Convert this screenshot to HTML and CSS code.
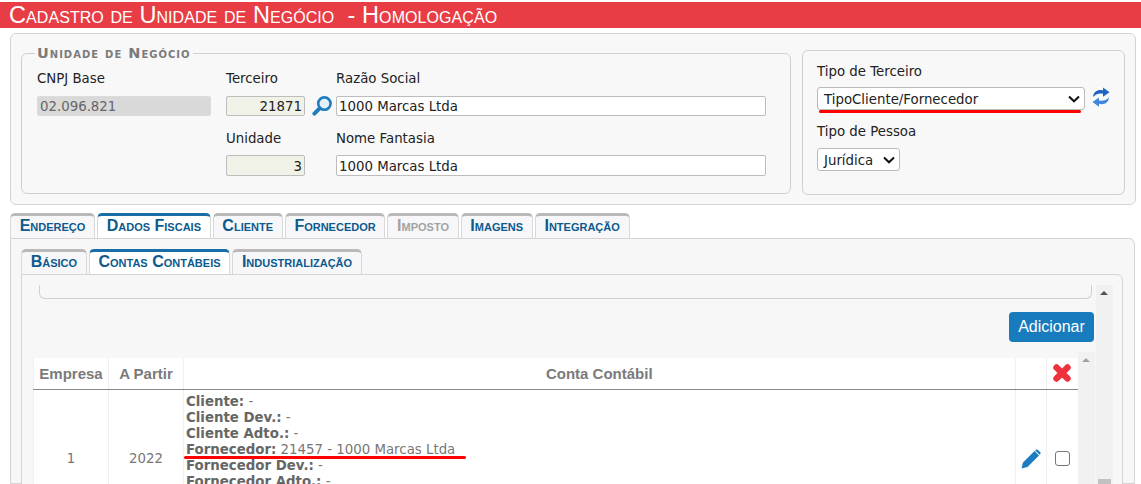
FILE: index.html
```html
<!DOCTYPE html>
<html lang="pt-BR">
<head>
  <meta charset="utf-8"/>
  <title>Cadastro de Unidade de Negócio</title>
  <link rel="stylesheet" href="styles.css">
</head>
<body>
  <h1 class="title">Cadastro de Unidade de Negócio &nbsp;- Homologação</h1>

  <!-- Cabeçalho -->
  <div class="top-panel">
    <fieldset class="unit-box">
      <legend>Unidade de Negócio</legend>
      <div class="unit-grid">
        <div class="col-cnpj">
          <label>CNPJ Base</label>
          <div class="field readonly">02.096.821</div>
        </div>
        <div class="col-code">
          <label>Terceiro</label>
          <div class="field code">21871</div>
          <label class="second">Unidade</label>
          <div class="field code">3</div>
        </div>
        <div class="col-search">
          <svg class="icon-search" viewBox="0 0 20 20" width="20" height="20">
            <circle cx="12.4" cy="7.6" r="6.2" fill="#e4f1fa" stroke="#1f7dbd" stroke-width="2.6"/>
            <path d="M7.6 12.4 L2.4 17.6" stroke="#1f7dbd" stroke-width="4" stroke-linecap="round"/>
          </svg>
        </div>
        <div class="col-name">
          <label>Razão Social</label>
          <div class="field">1000 Marcas Ltda</div>
          <label class="second">Nome Fantasia</label>
          <div class="field">1000 Marcas Ltda</div>
        </div>
      </div>
    </fieldset>

    <div class="type-box">
      <label class="first">Tipo de Terceiro</label>
      <div class="select-row">
        <div class="select wide">
          <span>TipoCliente/Fornecedor</span>
          <svg class="chevron" viewBox="0 0 12 8" width="12" height="8"><path d="M1 1.5 L6 6.3 L11 1.5" fill="none" stroke="#111" stroke-width="2"/></svg>
          <i class="red-line"></i>
        </div>
        <svg class="icon-refresh" viewBox="0 0 18 20" width="18" height="20">
          <path d="M1 10 C1.5 4.5 6 2.2 11 3.4 L11 0.4 L17.5 5.2 L11 9.8 L11 6.8 C7.5 6 4 7 1 10 Z" fill="#1d63c4"/>
          <path d="M17 10.5 C16.5 16 12 18 7 16.8 L7 19.8 L0.5 15 L7 10.4 L7 13.4 C10.5 14.2 14 13.5 17 10.5 Z" fill="#3f86dc"/>
        </svg>
      </div>
      <label class="second">Tipo de Pessoa</label>
      <div class="select small">
        <span>Jurídica</span>
        <svg class="chevron" viewBox="0 0 12 8" width="12" height="8"><path d="M1 1.5 L6 6.3 L11 1.5" fill="none" stroke="#111" stroke-width="2"/></svg>
      </div>
    </div>
  </div>

  <!-- Abas -->
  <ul class="tabs main-tabs">
    <li>Endereço</li>
    <li class="active">Dados Fiscais</li>
    <li>Cliente</li>
    <li>Fornecedor</li>
    <li class="disabled">Imposto</li>
    <li>Imagens</li>
    <li>Integração</li>
  </ul>
  <div class="tab-panel">
    <ul class="tabs sub-tabs">
      <li>Básico</li>
      <li class="active">Contas Contábeis</li>
      <li>Industrialização</li>
    </ul>
    <div class="sub-panel">
      <div class="scroll-area">
        <div class="fieldset-end"></div>
        <div class="actions"><button class="btn-add">Adicionar</button></div>
        <div class="table-wrap">
          <table class="grid">
            <thead>
              <tr>
                <th class="c-emp">Empresa</th>
                <th class="c-year">A Partir</th>
                <th>Conta Contábil</th>
                <th class="c-edit"></th>
                <th class="c-check">
                  <svg viewBox="0 0 20 20" width="20" height="20"><path d="M4.5 4.5 L15.5 15.5 M15.5 4.5 L4.5 15.5" stroke="#f0323c" stroke-width="6.4" stroke-linecap="round"/></svg>
                </th>
              </tr>
            </thead>
            <tbody>
              <tr>
                <td class="center">1</td>
                <td class="center">2022</td>
                <td class="accounts">
                  <div><b>Cliente:</b> -</div>
                  <div><b>Cliente Dev.:</b> -</div>
                  <div><b>Cliente Adto.:</b> -</div>
                  <div class="marked"><b>Fornecedor:</b> 21457 - 1000 Marcas Ltda<i class="red-line"></i></div>
                  <div><b>Fornecedor Dev.:</b> -</div>
                  <div><b>Fornecedor Adto.:</b> -</div>
                </td>
                <td class="center">
                  <svg viewBox="0 0 20 20" width="20" height="20"><path d="M0.5 19.5 L2 13.5 L13.5 2 L18 6.5 L6.5 18 Z" fill="#1c7cc0"/><path d="M14.8 0.8 Q15.8 0 16.8 0.8 L19.2 3.2 Q20 4.2 19.2 5.2 L18.6 5.8 L14.2 1.4 Z" fill="#1c7cc0"/></svg>
                </td>
                <td class="center"><span class="checkbox"></span></td>
              </tr>
            </tbody>
          </table>
          <div class="scrollbar inner"><i class="arrow"></i></div>
        </div>
      </div>
      <div class="scrollbar outer"><i class="arrow"></i><i class="thumb"></i></div>
    </div>
  </div>
</body>
</html>
```

FILE: styles.css
```css
html, body {
  height: 484px;
  overflow: hidden;
}
body {
  margin: 0;
  padding-top: 2px;
  background: #fff;
  font-family: "DejaVu Sans", Verdana, sans-serif;
  font-size: 13.33px;
  color: #222;
  box-sizing: border-box;
}
.title {
  margin: 0;
  height: 26px;
  line-height: 26px;
  padding-left: 9px;
  background: #e83d45;
  color: #fff;
  font-family: "Liberation Sans", Arial, sans-serif;
  font-size: 23.5px;
  letter-spacing: 0.07px;
  font-weight: normal;
  font-variant: small-caps;
  white-space: nowrap;
}

/* Cabeçalho */
.top-panel {
  display: flex;
  align-items: flex-start;
  gap: 11px;
  margin: 5px 5px 0 10px;
  padding: 15px 10px 10px 10px;
  height: 172px;
  box-sizing: border-box;
  background: #f8f8f8;
  border: 1px solid #d4d4d4;
  border-radius: 6px;
}
label {
  display: block;
  height: 16px;
  line-height: 16px;
  margin-bottom: 9px;
}
label.second {
  margin-top: 15px;
  margin-bottom: 8px;
}
label.first {
  margin-bottom: 7px;
}
.unit-box {
  flex: none;
  width: 770px;
  height: 147px;
  box-sizing: border-box;
  margin: -2px 0 0 0;
  padding: 0 15px;
  border: 1px solid #d0d0d0;
  border-radius: 6px;
}
legend {
  padding: 0 2px;
  margin-left: -2px;
  color: #7b7b7b;
  font-size: 14.5px;
  line-height: 12px;
  font-weight: bold;
  font-variant: small-caps;
  letter-spacing: 1px;
}
.unit-grid {
  display: flex;
  padding-top: 12px;
}
.col-cnpj { width: 189px; }
.col-code { width: 79px; }
.col-search { width: 31px; padding: 25px 0 0 7px; box-sizing: border-box; }
.col-name { width: 430px; }
.icon-search { display: block; }
.field {
  height: 20px;
  line-height: 20px;
  padding: 0 2px;
  box-sizing: border-box;
  background: #fff;
  border: 1px solid #bdbdbd;
  border-radius: 2px;
  white-space: nowrap;
}
.second + .field {
  height: 21px;
  line-height: 21px;
}
.field.readonly {
  width: 174px;
  background: #d9d9d9;
  border-color: #dcdcdc;
  color: #666;
}
.field.code {
  background: #f0f2e8;
  text-align: right;
}
.type-box {
  flex: none;
  width: 323px;
  height: 145px;
  box-sizing: border-box;
  margin-top: 1px;
  padding: 13px 14px;
  border: 1px solid #d0d0d0;
  border-radius: 6px;
}
.type-box label.second {
  margin-top: 14px;
}
.select-row {
  display: flex;
  gap: 7px;
}
.select {
  position: relative;
  display: flex;
  align-items: center;
  justify-content: space-between;
  height: 23px;
  box-sizing: border-box;
  padding: 0 4px 0 6px;
  background: #fff;
  border: 1px solid #bbb;
  border-radius: 3px;
}
.select span {
  padding-top: 2px;
}
.select.wide { width: 268px; }
.select.small { width: 83px; }
.red-line {
  position: absolute;
  height: 3px;
  background: #f00;
  border-radius: 2px;
}
.select .red-line {
  left: 1px;
  right: 3px;
  bottom: -4px;
}

/* Abas */
.tabs {
  display: flex;
  gap: 2px;
  margin: 0;
  padding: 0;
  list-style: none;
}
.tabs li {
  height: 25px;
  padding: 0 8.7px;
  box-sizing: border-box;
  background: #f7f7f9;
  border: 1px solid #d8d8d8;
  border-top: 3px solid #b9b9b9;
  border-bottom: none;
  border-radius: 5px 5px 0 0;
  color: #0c5a8e;
  font-family: "Liberation Sans", Arial, sans-serif;
  font-size: 16px;
  line-height: 19px;
  font-weight: bold;
  font-variant: small-caps;
  white-space: nowrap;
}
.tabs li.active {
  background: #fff;
  border-top-color: #1a6ea8;
}
.tabs li.disabled {
  color: #a3a3a3;
}
.main-tabs {
  margin: 8px 0 0 10px;
}
.tab-panel {
  height: 246px;
  margin: 0 6px 0 10px;
  padding: 10px 0 0 10px;
  box-sizing: border-box;
  background: #f7f7f7;
  border: 1px solid #d4d4d4;
  border-radius: 0 6px 0 0;
}
.sub-panel {
  display: flex;
  height: 210px;
  margin-right: 11px;
  padding: 10px 9px 0 11px;
  background: #f7f7f7;
  border: 1px solid #d4d4d4;
  border-radius: 0 6px 0 0;
  overflow: hidden;
}
.scroll-area {
  flex: 1;
  min-width: 0;
}
.fieldset-end {
  height: 14px;
  margin: 0 0 0 6px;
  width: 1053px;
  box-sizing: border-box;
  border: 1px solid #d0d0d0;
  border-top: none;
  border-radius: 0 0 6px 6px;
}
.actions {
  display: flex;
  justify-content: flex-end;
  margin-top: 13px;
  height: 30px;
  margin-right: 2px;
}
.btn-add {
  width: 85px;
  height: 30px;
  padding: 0;
  border: none;
  border-radius: 4px;
  background: #187bbd;
  color: #fff;
  font-family: "Liberation Sans", Arial, sans-serif;
  font-size: 16px;
}
.table-wrap {
  display: flex;
  margin: 10px 0 0 0;
}
.grid {
  width: 1045px;
  table-layout: fixed;
  border-collapse: collapse;
  margin-top: 6px;
  background: #fff;
  align-self: flex-start;
}
.grid th {
  height: 31px;
  box-sizing: border-box;
  padding: 0;
  border-left: 1px solid #f0f0f0;
  border-bottom: 1px solid #888;
  color: #7a7a7a;
  font-family: "Liberation Sans", Arial, sans-serif;
  font-size: 15px;
  font-weight: bold;
  text-align: center;
}
.grid th svg { display: block; margin: 0 auto; }
.grid td {
  padding: 4px 3px 38px 2px;
  border-left: 1px solid #f0f0f0;
  color: #777;
  vertical-align: middle;
}
.grid td.center {
  padding: 4px 3px;
}
.c-emp { width: 75px; }
.c-year { width: 75px; }
.c-edit { width: 31px; }
.c-check { width: 32px; }
.center { text-align: center; }
.grid td.center svg { display: block; margin: 0 auto; }
.accounts div {
  height: 16px;
  line-height: 16px;
  white-space: nowrap;
}
.accounts b { color: #666; }
.marked {
  position: relative;
}
.marked .red-line {
  left: -2px;
  width: 282px;
  bottom: -1px;
}
.checkbox {
  display: block;
  width: 15px;
  height: 15px;
  box-sizing: border-box;
  margin: 0 auto;
  background: #fff;
  border: 1px solid #777;
  border-radius: 3px;
}

/* Barras de rolagem */
.scrollbar {
  position: relative;
  flex: none;
  width: 17px;
  background: #f1f1f1;
}
.scrollbar.inner {
  height: 200px;
}
.scrollbar.outer {
  margin: 0;
  height: 200px;
}
.arrow {
  position: absolute;
  top: 6px;
  left: 4px;
  width: 0;
  height: 0;
  border-left: 4px solid transparent;
  border-right: 4px solid transparent;
  border-bottom: 4px solid #505050;
}
.inner .arrow { border-bottom-color: #a3a3a3; }
.thumb {
  position: absolute;
  left: 2px;
  right: 2px;
  top: 194px;
  height: 20px;
  background: #c1c1c1;
}
```
